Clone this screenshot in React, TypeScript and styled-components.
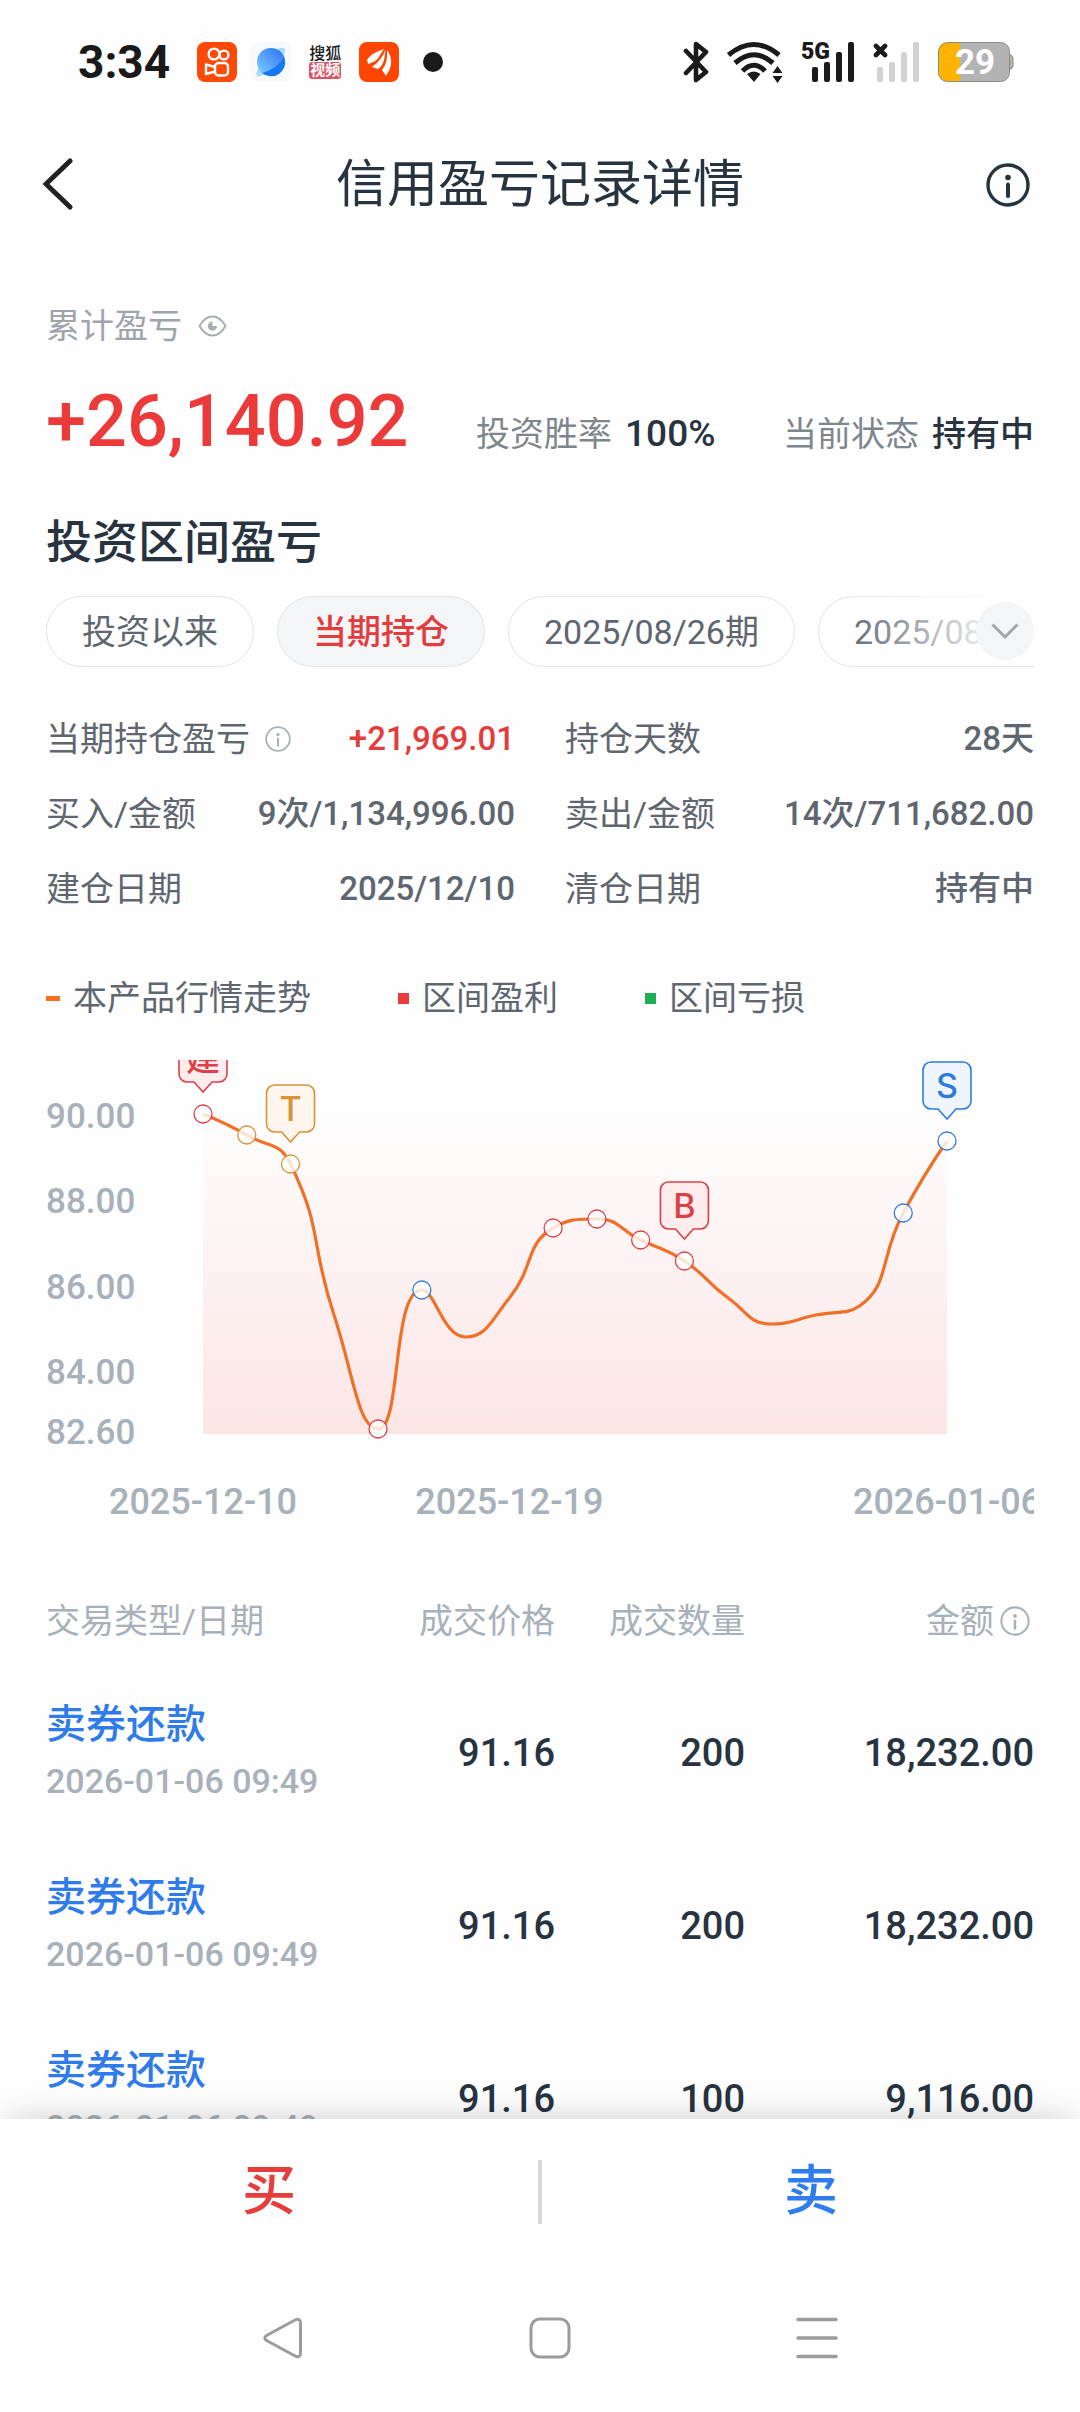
import React, { useState } from "react";
import styled, { createGlobalStyle } from "styled-components";

const GlobalStyle = createGlobalStyle`
  *, *::before, *::after { box-sizing: border-box; }
  body {
    margin: 0;
    background: #fefefe;
    color: #27333f;
    font-family: Roboto, "Noto Sans CJK SC", sans-serif;
    font-size: 34px;
    line-height: 40px;
  }
  button {
    margin: 0;
    padding: 0;
    border: 0;
    background: none;
    color: inherit;
    font: inherit;
    cursor: pointer;
  }
  svg { display: block; flex: none; }
`;

const Page = styled.div`
  display: flex;
  flex-direction: column;
  height: 100vh;
  overflow: hidden;
`;

/* ---------- system status bar ---------- */

const StatusBar = styled.div`
  flex: none;
  display: flex;
  align-items: center;
  justify-content: space-between;
  height: 124px;
  padding: 0 66px 0 78px;
  color: #1a1a1a;
`;

const StatusGroup = styled.div<{ $gap: number }>`
  display: flex;
  align-items: center;
  gap: ${(p) => p.$gap}px;
`;

const Clock = styled.time`
  margin-right: 13px;
  font-size: 46px;
  font-weight: 700;
`;

const SohuBadge = styled.span`
  display: grid;
  width: 40px;
  justify-items: center;
  font-size: 16px;
  font-weight: 500;
  line-height: 17px;
`;

const SohuTag = styled.span`
  padding: 0 1px;
  border-radius: 3px;
  background: #dc5563;
  color: #fff;
  font-size: 15px;
  font-weight: 700;
`;

const MoreDot = styled.span`
  width: 20px;
  height: 20px;
  margin-left: 10px;
  border-radius: 50%;
  background: #1a1a1a;
`;

/* ---------- title bar ---------- */

const TitleBar = styled.header`
  flex: none;
  display: grid;
  grid-template-columns: 67px 1fr 60px;
  align-items: center;
  height: 122px;
  padding: 0 50px 0 43px;
`;

const Title = styled.h1`
  margin: 0;
  font-size: 51px;
  font-weight: 400;
  line-height: 60px;
  text-align: center;
`;

const IconButton = styled.button<{ $end?: boolean }>`
  display: flex;
  justify-content: ${(p) => (p.$end ? "flex-end" : "flex-start")};
`;

/* ---------- content ---------- */

const Content = styled.main`
  flex: 1;
  min-height: 0;
  overflow: hidden;
  padding: 60px 46px 0;
`;

const SummaryLabel = styled.div`
  display: flex;
  align-items: center;
  gap: 16px;
  color: #9ea4aa;
`;

const SummaryRow = styled.div`
  display: flex;
  align-items: baseline;
  justify-content: space-between;
  margin-top: 40px;
`;

const Total = styled.strong`
  color: #ec3a3a;
  font-size: 72px;
  font-weight: 500;
  line-height: 72px;
`;

const Fact = styled.span`
  display: flex;
  align-items: baseline;
  gap: 13px;
  color: #7e868d;
`;

const FactValue = styled.b<{ $numeric?: boolean }>`
  color: #27333f;
  font-size: ${(p) => (p.$numeric ? 37 : 34)}px;
  font-weight: 500;
`;

const SectionTitle = styled.h2`
  margin: 54px 0 24px;
  font-size: 46px;
  font-weight: 500;
  line-height: 60px;
`;

const ChipBar = styled.div`
  position: relative;
  display: flex;
  gap: 23px;
  overflow: hidden;
`;

const Chip = styled.button<{ $active: boolean }>`
  flex: none;
  height: 71px;
  padding: 0 35px;
  border: 1px solid #e2e4e6;
  border-radius: 36px;
  background: ${(p) => (p.$active ? "#f4f5f7" : "transparent")};
  color: ${(p) => (p.$active ? "#e23c3c" : "#5f6670")};
  font-weight: ${(p) => (p.$active ? 500 : 400)};
`;

const ChipFade = styled.div`
  position: absolute;
  top: 0;
  right: 0;
  bottom: 1px;
  width: 190px;
  background: linear-gradient(to right, rgba(254, 254, 254, 0), #fefefe 85%);
  pointer-events: none;
`;

const ExpandButton = styled.button`
  position: absolute;
  top: 6px;
  right: 0;
  display: grid;
  place-items: center;
  width: 58px;
  height: 58px;
  border-radius: 50%;
  background: #f4f5f7;
`;

const Stats = styled.dl`
  display: grid;
  grid-template-columns: 1fr 1fr;
  gap: 35px 50px;
  margin: 52px 0 0;
  color: #5f6670;
`;

const Stat = styled.div`
  display: flex;
  align-items: center;
  justify-content: space-between;
  height: 40px;
`;

const StatName = styled.dt`
  display: flex;
  align-items: center;
  gap: 15px;
`;

const StatValue = styled.dd<{ $gain?: boolean }>`
  margin: 0;
  color: ${(p) => (p.$gain ? "#e23c3c" : "inherit")};
  font-size: 33px;
  font-weight: 500;
`;

const Legend = styled.ul`
  display: flex;
  gap: 87px;
  margin: 69px 0 42px;
  padding: 0;
  list-style: none;
  color: #5f6670;
`;

const LegendItem = styled.li`
  display: flex;
  align-items: center;
  gap: 13px;
`;

const Swatch = styled.i<{ $color: string; $line?: boolean }>`
  width: ${(p) => (p.$line ? 14 : 11)}px;
  height: ${(p) => (p.$line ? 5 : 11)}px;
  background: ${(p) => p.$color};
`;

const ChartSvg = styled.svg`
  width: 100%;
  height: auto;
`;

const AxisText = styled.text<{ $size: number }>`
  fill: #a8b0b9;
  font-size: ${(p) => p.$size}px;
  font-weight: 500;
`;

const TagText = styled.text`
  font-family: Inter, "Noto Sans CJK SC", sans-serif;
  font-size: 34px;
  font-weight: 500;
`;

const Trades = styled.table`
  width: 100%;
  margin-top: 70px;
  border-collapse: collapse;
  table-layout: fixed;
`;

const HeadCell = styled.th<{ $width?: number; $start?: boolean }>`
  width: ${(p) => (p.$width ? `${p.$width}px` : "auto")};
  padding: 0 0 25px;
  color: #a8b0b9;
  font-weight: 400;
  text-align: ${(p) => (p.$start ? "left" : "right")};
`;

const HeadWithIcon = styled.span`
  display: flex;
  align-items: center;
  justify-content: flex-end;
  gap: 6px;
  padding-right: 4px;
`;

const TypeCell = styled.td`
  height: 173px;
  padding: 0;
  line-height: 56px;
  white-space: nowrap;
`;

const TradeType = styled.div`
  color: #2f7bea;
  font-size: 40px;
  font-weight: 500;
`;

const TradeTime = styled.time`
  display: block;
  color: #a8b0b9;
  font-weight: 500;
`;

const NumberCell = styled.td`
  padding: 0;
  font-size: 38px;
  font-weight: 500;
  text-align: right;
`;

/* ---------- bottom ---------- */

const Dock = styled.footer`
  position: relative;
  flex: none;
  display: grid;
  grid-template-columns: 1fr 4px 1fr;
  align-items: center;
  height: 145px;
  background: #fefefe;
  box-shadow: 0 -2px 36px -8px rgba(0, 0, 0, 0.28);
`;

const DockButton = styled.button<{ $color: string }>`
  height: 100%;
  color: ${(p) => p.$color};
  font-size: 54px;
  font-weight: 500;
`;

const DockDivider = styled.span`
  height: 64px;
  background: #d8d8d8;
`;

const SystemNav = styled.nav`
  position: relative;
  flex: none;
  display: grid;
  grid-template-columns: repeat(3, 1fr);
  justify-items: center;
  align-items: center;
  height: 148px;
  padding: 0 130px 0 150px;
  background: #fefefe;
`;

/* ---------- icons ---------- */

function InfoIcon({ size, color, stroke }: { size: number; color: string; stroke: number }) {
  return (
    <svg width={size} height={size} viewBox="0 0 44 44" fill="none" stroke={color} strokeWidth={stroke}>
      <circle cx="22" cy="22" r="20" />
      <circle cx="22" cy="14.5" r="2.8" fill={color} stroke="none" />
      <path d="M22 21.5V33" strokeLinecap="round" strokeWidth={stroke + 0.6} />
    </svg>
  );
}

function KuaishouIcon() {
  return (
    <svg width="40" height="40" viewBox="0 0 40 40">
      <rect width="40" height="40" rx="8" fill="#ff4906" />
      <g fill="none" stroke="#fff" strokeWidth="2.4">
        <circle cx="17" cy="12" r="5.4" />
        <circle cx="27" cy="13" r="4.4" />
        <rect x="18" y="21" width="13" height="12.500" rx="3.5" />
        <path d="M18 25l-9-2.500v9.500l9-2.500" strokeLinejoin="round" />
      </g>
    </svg>
  );
}

function BrowserIcon() {
  return (
    <svg width="40" height="40" viewBox="0 0 40 40">
      <defs>
        <linearGradient id="planet" x1="0" y1="1" x2="1" y2="0">
          <stop offset="0" stopColor="#7fd4ff" />
          <stop offset="1" stopColor="#2b6df6" />
        </linearGradient>
      </defs>
      <rect width="40" height="40" rx="8" fill="#f8f9fb" />
      <path d="M26 7q8-3 8 1 0 8-12 18-12 10-16 8-2-2 2-9z" fill="#a5dcfb" />
      <circle cx="20" cy="20" r="14" fill="url(#planet)" />
      <path d="M33 15a14 14 0 0 1-22 16q15-4 22-16z" fill="#1777f2" />
    </svg>
  );
}

function EastMoneyIcon() {
  return (
    <svg width="40" height="40" viewBox="0 0 40 40">
      <rect width="40" height="40" rx="8" fill="#ff4500" />
      <g fill="#fff">
        <path d="M25 7Q12 11 8 18l1 4q8-2 11-7 2-4 5-8z" />
        <path d="M26.500 7.500Q23 18 13 25l6 2q5-4 6-9 1-5 1.500-10.500z" />
        <path d="M28 8q1 13-5 20l4 6q4-6 5-11 1-9-4-15z" />
      </g>
    </svg>
  );
}

function BluetoothIcon() {
  return (
    <svg width="26" height="42" viewBox="0 0 26 42" fill="none" stroke="#1a1a1a" strokeWidth="4.600" strokeLinejoin="round" strokeLinecap="round">
      <path d="M3 10L23 31L13 39V3L23 11L3 32" />
    </svg>
  );
}

function WifiIcon() {
  return (
    <svg width="58" height="42" viewBox="0 0 58 42" fill="none" stroke="#1a1a1a" strokeWidth="5">
      <path d="M2.500 14Q28 -7 53 14M9 22Q28 5.500 47 22M16.500 30Q28 18.500 39 30" />
      <path d="M21 33Q28 28 34.500 33L28 41Z" fill="#1a1a1a" stroke="none" />
      <path d="M51.500 25l5 7h-10zM51.500 42l5-7h-10z" fill="#1a1a1a" stroke="none" />
    </svg>
  );
}

function SignalBars({ color }: { color: string }) {
  return (
    <g fill={color}>
      <rect x="11" y="26" width="6" height="15" rx="2" />
      <rect x="23" y="21" width="6" height="20" rx="2" />
      <rect x="35" y="11" width="6" height="30" rx="2" />
      <rect x="47" y="1" width="6" height="40" rx="2" />
    </g>
  );
}

function SignalIcon() {
  return (
    <svg width="55" height="42" viewBox="0 0 55 42">
      <SignalBars color="#1a1a1a" />
      <text x="0" y="18" fontSize="23" fontWeight="900" fill="#1a1a1a">5G</text>
    </svg>
  );
}

function NoSignalIcon() {
  return (
    <svg width="48" height="42" viewBox="7 0 48 42">
      <SignalBars color="#d2d2d2" />
      <path d="M10 5l9 9m0-9l-9 9" stroke="#1a1a1a" strokeWidth="4.600" strokeLinecap="round" />
    </svg>
  );
}

function BatteryIcon() {
  return (
    <svg width="76" height="40" viewBox="0 0 76 40">
      <path d="M70 12q5 1 5 4v8q0 3-5 4z" fill="#b3b3b3" stroke="#8a8a80" />
      <rect x="0.500" y="0.500" width="71" height="39" rx="9" fill="#b3b3b3" />
      <path d="M22 .5H9.500a9 9 0 0 0-9 9v21a9 9 0 0 0 9 9H22z" fill="#ffb300" />
      <rect x="0.500" y="0.500" width="71" height="39" rx="9" fill="none" stroke="#8a8a80" />
      <text x="37" y="32" fontSize="35" fontWeight="700" fill="#fff" textAnchor="middle">29</text>
    </svg>
  );
}

function EyeIcon() {
  return (
    <svg width="29" height="22" viewBox="0 0 29 22" fill="none" stroke="#a8adb4" strokeWidth="2">
      <path d="M1.500 11Q7 1.500 14.500 1.500T27.500 11Q22 20.500 14.500 20.500T1.500 11z" />
      <path d="M14.500 6.500v4.500h4.500a4.600 4.600 0 1 1-4.500-4.500z" fill="#a8adb4" stroke="none" />
    </svg>
  );
}

/* ---------- chart ---------- */

type Point = [number, number];
type Tone = "buy" | "sell" | "both";

const TONES: Record<Tone, { stroke: string; fill: string }> = {
  buy: { stroke: "#dc4046", fill: "#ffecec" },
  sell: { stroke: "#2f7bdc", fill: "#eef5ff" },
  both: { stroke: "#d99237", fill: "#fef5ec" },
};

const START_X = 157;
const STEP_X = 744 / 17;
const BASE_Y = 374;
const LEVELS = [54, 75, 104, 256, 369, 230, 277, 238, 168, 159, 180, 201, 238, 264, 255, 246, 153, 81];

const POINTS: Point[] = LEVELS.map((y, i) => [START_X + i * STEP_X, y]);

const MARKS: { at: number; tone: Tone; tag?: string }[] = [
  { at: 0, tone: "buy", tag: "建" },
  { at: 1, tone: "both" },
  { at: 2, tone: "both", tag: "T" },
  { at: 4, tone: "buy" },
  { at: 5, tone: "sell" },
  { at: 8, tone: "buy" },
  { at: 9, tone: "buy" },
  { at: 10, tone: "buy" },
  { at: 11, tone: "buy", tag: "B" },
  { at: 16, tone: "sell" },
  { at: 17, tone: "sell", tag: "S" },
];

const PRICE_TICKS: [string, number][] = [
  ["90.00", 56],
  ["88.00", 141],
  ["86.00", 227],
  ["84.00", 312],
  ["82.60", 372],
];

const DATE_TICKS: [string, number][] = [
  ["2025-12-10", 0],
  ["2025-12-19", 7],
  ["2026-01-06", 17],
];

const clamp = (v: number, a: number, b: number) => Math.min(Math.max(v, Math.min(a, b)), Math.max(a, b));
const dist = (a: Point, b: Point) => Math.hypot(b[0] - a[0], b[1] - a[1]);

/* Smooth curve whose control points never overshoot the neighbouring values. */
function smoothPath(points: Point[]): string {
  let d = `M${points[0].join(" ")}`;
  let out: Point = points[0];
  for (let i = 1; i < points.length; i++) {
    const p = points[i];
    const prev = points[i - 1];
    const next = points[i + 1];
    let into: Point = p;
    let nextOut: Point = p;
    if (next) {
      const lenPrev = dist(prev, p);
      const lenNext = dist(p, next);
      const ratio = lenNext / (lenNext + lenPrev);
      const ahead = [0, 1].map((k) => clamp(p[k] + (next[k] - prev[k]) * 0.5 * ratio, p[k], next[k]));
      into = [0, 1].map((k) => clamp(p[k] - ((ahead[k] - p[k]) * lenPrev) / lenNext, p[k], prev[k])) as Point;
      nextOut = [0, 1].map((k) => p[k] + ((p[k] - into[k]) * lenNext) / lenPrev) as Point;
    }
    d += `C${out.join(" ")} ${into.join(" ")} ${p.join(" ")}`;
    out = nextOut;
  }
  return d;
}

function Tag({ x, y, tone, label }: { x: number; y: number; tone: Tone; label: string }) {
  const { stroke, fill } = TONES[tone];
  return (
    <g transform={`translate(${x} ${y - 22})`}>
      <path
        d="M0 0l-9-10h-7a8 8 0 0 1-8-8v-31a8 8 0 0 1 8-8h32a8 8 0 0 1 8 8v31a8 8 0 0 1-8 8h-7z"
        fill={fill}
        stroke={stroke}
        strokeWidth="1.600"
      />
      <TagText y="-21" textAnchor="middle" fill={stroke}>{label}</TagText>
    </g>
  );
}

function TrendChart() {
  const line = smoothPath(POINTS);
  const endX = POINTS[POINTS.length - 1][0];
  return (
    <ChartSvg viewBox="0 0 988 471" role="img" aria-label="本产品行情走势">
      <defs>
        <linearGradient id="area" gradientUnits="userSpaceOnUse" x1="0" y1="45" x2="0" y2={BASE_Y}>
          <stop offset="0" stopColor="#e93030" stopOpacity="0" />
          <stop offset="1" stopColor="#e93030" stopOpacity="0.120" />
        </linearGradient>
      </defs>
      {PRICE_TICKS.map(([label, y]) => (
        <AxisText key={label} $size={35} x="0" y={y + 12}>{label}</AxisText>
      ))}
      {DATE_TICKS.map(([label, at]) => (
        <AxisText key={label} $size={36} x={POINTS[at][0]} y={454} textAnchor="middle">{label}</AxisText>
      ))}
      <rect x={START_X} y="45" width={endX - START_X} height={BASE_Y - 45} fill="url(#area)" />
      <path d={line} fill="none" stroke="#f07028" strokeWidth="3.200" />
      {MARKS.map(({ at, tone, tag }) => {
        const [x, y] = POINTS[at];
        return (
          <g key={at}>
            <circle cx={x} cy={y} r="9" fill="#fff" fillOpacity="0.800" stroke={TONES[tone].stroke} strokeWidth="1.300" />
            {tag && <Tag x={x} y={y} tone={tone} label={tag} />}
          </g>
        );
      })}
    </ChartSvg>
  );
}

/* ---------- data ---------- */

const PERIODS = ["投资以来", "当期持仓", "2025/08/26期", "2025/08/12期"];

const STATS = [
  { name: "当期持仓盈亏", value: "+21,969.01", gain: true, info: true },
  { name: "持仓天数", value: "28天" },
  { name: "买入/金额", value: "9次/1,134,996.00" },
  { name: "卖出/金额", value: "14次/711,682.00" },
  { name: "建仓日期", value: "2025/12/10" },
  { name: "清仓日期", value: "持有中" },
];

const TRADES = [
  { type: "卖券还款", time: "2026-01-06 09:49", price: "91.16", count: "200", amount: "18,232.00" },
  { type: "卖券还款", time: "2026-01-06 09:49", price: "91.16", count: "200", amount: "18,232.00" },
  { type: "卖券还款", time: "2026-01-06 09:49", price: "91.16", count: "100", amount: "9,116.00" },
];

export default function App() {
  const [period, setPeriod] = useState(1);

  return (
    <Page>
      <GlobalStyle />
      <StatusBar>
        <StatusGroup $gap={14}>
          <Clock>3:34</Clock>
          <KuaishouIcon />
          <BrowserIcon />
          <SohuBadge>
            搜狐
            <SohuTag>视频</SohuTag>
          </SohuBadge>
          <EastMoneyIcon />
          <MoreDot />
        </StatusGroup>
        <StatusGroup $gap={17}>
          <BluetoothIcon />
          <WifiIcon />
          <SignalIcon />
          <NoSignalIcon />
          <BatteryIcon />
        </StatusGroup>
      </StatusBar>

      <TitleBar>
        <IconButton aria-label="返回">
          <svg width="32" height="54" viewBox="0 0 32 54" fill="none" stroke="#222" strokeWidth="5" strokeLinecap="round">
            <path d="M27 3L3 26L27 49" />
          </svg>
        </IconButton>
        <Title>信用盈亏记录详情</Title>
        <IconButton $end aria-label="说明">
          <InfoIcon size={44} color="#27333f" stroke={3.4} />
        </IconButton>
      </TitleBar>

      <Content>
        <SummaryLabel>
          累计盈亏
          <IconButton aria-label="隐藏金额">
            <EyeIcon />
          </IconButton>
        </SummaryLabel>
        <SummaryRow>
          <Total>+26,140.92</Total>
          <Fact>
            投资胜率 <FactValue $numeric>100%</FactValue>
          </Fact>
          <Fact>
            当前状态 <FactValue>持有中</FactValue>
          </Fact>
        </SummaryRow>

        <SectionTitle>投资区间盈亏</SectionTitle>
        <ChipBar>
          {PERIODS.map((label, i) => (
            <Chip key={label} $active={i === period} onClick={() => setPeriod(i)}>
              {label}
            </Chip>
          ))}
          <ChipFade />
          <ExpandButton aria-label="展开全部区间">
            <svg width="28" height="16" viewBox="0 0 28 16" fill="none" stroke="#a3a6aa" strokeWidth="3">
              <path d="M1.500 1.500L14 14L26.500 1.500" />
            </svg>
          </ExpandButton>
        </ChipBar>

        <Stats>
          {STATS.map((s) => (
            <Stat key={s.name}>
              <StatName>
                {s.name}
                {s.info && <InfoIcon size={26} color="#a8b0b9" stroke={3} />}
              </StatName>
              <StatValue $gain={s.gain}>{s.value}</StatValue>
            </Stat>
          ))}
        </Stats>

        <Legend>
          <LegendItem>
            <Swatch $color="#f96d1f" $line />
            本产品行情走势
          </LegendItem>
          <LegendItem>
            <Swatch $color="#ea3b3b" />
            区间盈利
          </LegendItem>
          <LegendItem>
            <Swatch $color="#1fad55" />
            区间亏损
          </LegendItem>
        </Legend>
        <TrendChart />

        <Trades>
          <thead>
            <tr>
              <HeadCell $start>交易类型/日期</HeadCell>
              <HeadCell $width={200}>成交价格</HeadCell>
              <HeadCell $width={190}>成交数量</HeadCell>
              <HeadCell $width={289}>
                <HeadWithIcon>
                  金额
                  <InfoIcon size={30} color="#a8b0b9" stroke={3} />
                </HeadWithIcon>
              </HeadCell>
            </tr>
          </thead>
          <tbody>
            {TRADES.map((t, i) => (
              <tr key={i}>
                <TypeCell>
                  <TradeType>{t.type}</TradeType>
                  <TradeTime>{t.time}</TradeTime>
                </TypeCell>
                <NumberCell>{t.price}</NumberCell>
                <NumberCell>{t.count}</NumberCell>
                <NumberCell>{t.amount}</NumberCell>
              </tr>
            ))}
          </tbody>
        </Trades>
      </Content>

      <Dock>
        <DockButton $color="#e63e3c">买</DockButton>
        <DockDivider />
        <DockButton $color="#2e7cee">卖</DockButton>
      </Dock>

      <SystemNav>
        <IconButton aria-label="系统返回">
          <svg width="40" height="42" viewBox="0 0 40 42" fill="none" stroke="#9c9c9c" strokeWidth="3" strokeLinejoin="round">
            <path d="M33 2.500L3.500 18.500Q0 21 3.500 23.500L33 39.500Q37.500 40.500 37.500 36V6Q37.500 1.500 33 2.500Z" />
          </svg>
        </IconButton>
        <IconButton aria-label="主屏幕">
          <svg width="42" height="42" viewBox="0 0 42 42" fill="none" stroke="#9c9c9c" strokeWidth="3">
            <rect x="2" y="2" width="38" height="38" rx="9" />
          </svg>
        </IconButton>
        <IconButton aria-label="最近任务">
          <svg width="42" height="42" viewBox="0 0 42 42" stroke="#9c9c9c" strokeWidth="3.500" strokeLinecap="round">
            <path d="M2 2.500H40M2 21H40M2 39.500H40" />
          </svg>
        </IconButton>
      </SystemNav>
    </Page>
  );
}
